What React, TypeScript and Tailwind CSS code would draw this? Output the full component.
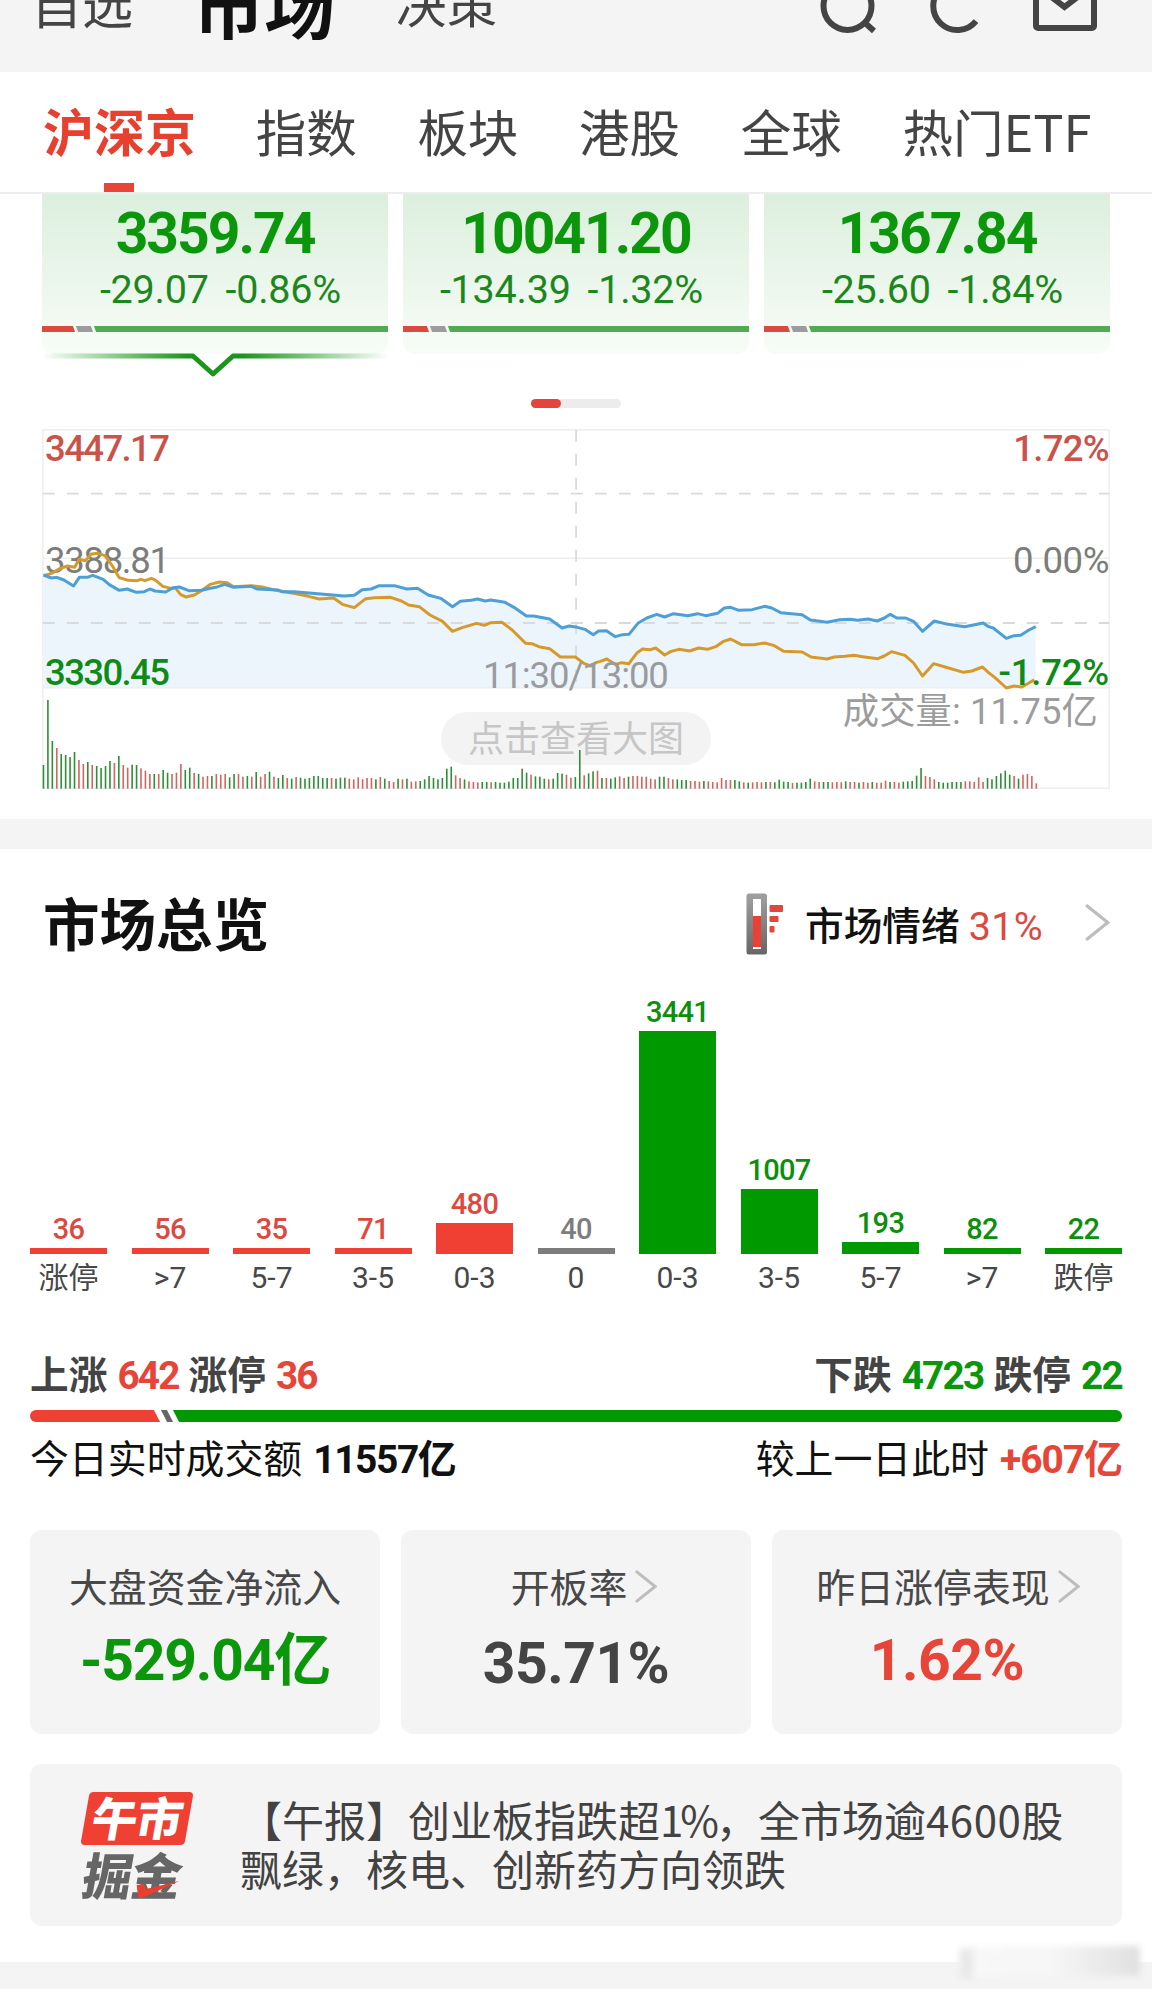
import { ReactNode } from 'react';

interface IndexCardProps {
  price: string;
  change: string;
  changeClass: string;
  redWidth: number;
  active?: boolean;
}

interface Bucket {
  label: string;
  count: number;
  height: number;
  tone: 'up' | 'flat' | 'down';
}

const indexes: IndexCardProps[] = [
  { price: '3359.74', change: '-29.07 -0.86%', changeClass: 'pl-[11px]', redWidth: 33, active: true },
  { price: '10041.20', change: '-134.39 -1.32%', changeClass: 'pr-[9px]', redWidth: 26 },
  { price: '1367.84', change: '-25.60 -1.84%', changeClass: 'pl-[11px]', redWidth: 26 },
];

const buckets: Bucket[] = [
  { label: '涨停', count: 36, height: 6, tone: 'up' },
  { label: '>7', count: 56, height: 6, tone: 'up' },
  { label: '5-7', count: 35, height: 6, tone: 'up' },
  { label: '3-5', count: 71, height: 6, tone: 'up' },
  { label: '0-3', count: 480, height: 31, tone: 'up' },
  { label: '0', count: 40, height: 6, tone: 'flat' },
  { label: '0-3', count: 3441, height: 223, tone: 'down' },
  { label: '3-5', count: 1007, height: 65, tone: 'down' },
  { label: '5-7', count: 193, height: 12, tone: 'down' },
  { label: '>7', count: 82, height: 6, tone: 'down' },
  { label: '跌停', count: 22, height: 6, tone: 'down' },
];

const priceLine =
  '38,465 60,474 75,472 95,480 122,498 138,472 160,472 176,466 205,478 222,494 250,511 272,507 298,517 320,515 336,507 350,513 380,516 400,503 418,501 445,512 480,511 505,505 520,502 545,493 570,502 620,499 635,507 695,510 705,515 740,515 880,528 908,526 930,509 955,507 978,497 1020,497 1055,507 1085,505 1115,525 1150,535 1183,560 1205,544 1235,541 1253,537 1275,543 1290,540 1330,547 1355,562 1390,588 1410,588 1455,597 1490,624 1510,618 1532,622 1554,628 1577,644 1592,633 1614,632 1639,650 1659,644 1677,643 1702,610 1727,594 1755,583 1777,591 1802,581 1842,587 1869,581 1892,587 1925,580 1944,564 1962,562 1985,571 2022,569 2057,559 2077,564 2102,578 2162,584 2185,600 2232,607 2267,599 2297,598 2317,601 2347,597 2372,603 2392,594 2409,583 2427,594 2452,594 2475,605 2499,634 2532,603 2562,611 2617,620 2669,609 2682,619 2697,624 2734,655 2755,647 2774,646 2797,630 2816,620';

const averageLine =
  '38,467 60,460 85,445 105,438 125,442 138,418 155,422 172,402 190,400 210,407 232,440 250,473 275,481 300,482 310,478 322,482 340,475 352,481 372,499 395,505 408,505 422,524 437,531 460,525 480,512 505,493 530,486 552,488 570,500 620,497 650,501 685,510 745,521 780,529 810,537 850,534 875,553 908,563 940,536 965,533 1010,532 1040,543 1060,555 1090,560 1120,585 1155,604 1183,634 1210,623 1250,610 1272,616 1290,608 1322,607 1350,630 1388,670 1405,671 1425,680 1455,686 1485,711 1527,711 1552,731 1570,738 1584,728 1597,724 1615,717 1639,733 1657,728 1677,731 1700,698 1715,687 1737,689 1752,684 1777,705 1795,694 1817,688 1847,693 1872,684 1897,688 1922,679 1940,665 1962,657 1992,674 2027,674 2057,669 2082,676 2110,694 2162,696 2187,711 2232,717 2252,711 2282,709 2307,706 2332,710 2374,716 2392,708 2412,695 2450,706 2474,729 2499,768 2530,731 2572,744 2614,757 2637,753 2667,741 2684,758 2702,773 2734,804 2755,798 2777,801 2792,792 2812,779';

// negative = red (up) minute, positive = green (down) minute
const volumes = [
  71, 266, 143, -122, 104, 101, 95, 110, -86, -74, 80, -71, 68, 62, 68, 83, -77, 98, -71, -63, 72, 71, -61, -54, -44,
  44, -44, 56, 48, -44, -48, -74, 56, 63, -47, 44, -36, -38, 38, -44, -42, -44, 34, 44, -44, -36, 38, -36, 50, -36,
  -44, 51, -36, 32, 41, -32, 30, -35, 33, 30, 32, 38, 38, 32, 32, -32, 30, 33, 33, -30, -28, -34, -28, -32, -32,
  28, -35, 30, -23, -20, 30, -28, 30, -21, -22, 23, 28, 38, 32, 28, 32, 60, 66, -40, -32, 28, -22, -20, -19, 20,
  20, -19, 20, 18, 18, 21, 32, 32, 60, 48, -42, 37, 36, 30, -28, 30, 47, 45, -42, -33, 35, 116, -40, 46, 52,
  -54, 32, -32, 30, 34, -37, -32, 36, -38, -38, -36, -36, -30, -28, 36, 36, -32, -28, 28, 26, 26, -23, -23, -21, 23,
  -22, -20, -19, -32, -26, -26, 26, 22, -19, 18, -19, -20, -19, 20, -20, 19, 27, 21, 20, -17, 18, 18, 20, 30, -22,
  -20, 20, 20, -19, -20, -19, 22, -20, -20, 18, -20, -18, 20, -18, -18, -24, 20, -20, -18, 21, 22, 23, 39, 62, -38,
  -35, -28, 20, 18, 18, 20, 20, 20, -22, -22, -20, -34, -20, 32, 28, 38, 46, 54, 42, -38, 30, -42, -44, -38, -16,
];

const barColor = { up: 'bg-[#ef4033]', flat: 'bg-[#7d7d7d]', down: 'bg-[#009900]' };
const countColor = { up: 'text-[#dc4a3f]', flat: 'text-[#7d7d7d]', down: 'text-[#0c8f0c]' };

function Chevron({ className }: { className: string }) {
  return (
    <svg viewBox="0 0 24 36" fill="none" stroke="#bdbdbd" strokeWidth="3.2" strokeLinecap="round" className={className}>
      <path d="M2 2 L22 18 L2 34" />
    </svg>
  );
}

function Header() {
  return (
    <header className="h-[72px] overflow-hidden bg-[#f4f4f4]">
      <div className="-mt-12 flex h-[100px] items-center pl-[31px] text-[51px] text-[#444]">
        <span>自选</span>
        <span className="ml-[60px] text-[71px] font-bold text-[#111]">市场</span>
        <span className="ml-[61px] text-[50.500px]">决策</span>
        <svg viewBox="0 0 300 100" fill="none" stroke="#444" strokeWidth="6" className="ml-[313px] h-[100px] w-[300px] shrink-0">
          <circle cx="37.500" cy="54" r="24" />
          <path d="M54 70 L64 79" />
          <path d="M166 69 A24 24 0 1 1 166 39" />
          <rect x="226" y="34" width="58" height="42" rx="2" />
          <path d="M235 40 L254.500 55 L274 40" />
        </svg>
      </div>
    </header>
  );
}

function Tabs() {
  const tabs = ['指数', '板块', '港股', '全球', '热门ETF'];
  return (
    <nav className="flex h-[122px] border-b-2 border-[#ededed] bg-white pl-[43px] text-[50.500px] leading-[116px] text-[#444]">
      <div className="flex w-[152px] flex-col">
        <span className="h-[111px] whitespace-nowrap text-[51px] font-bold text-[#e8402f]">沪深京</span>
        <span className="ml-[61px] h-[9px] w-[30px] bg-[#e64537]" />
      </div>
      {tabs.map((tab) => (
        <span key={tab} className="ml-[60.700px] whitespace-nowrap">{tab}</span>
      ))}
    </nav>
  );
}

function IndexCard({ price, change, changeClass, redWidth, active }: IndexCardProps) {
  return (
    <div className="relative h-[160px] w-[346px] rounded-b-xl bg-gradient-to-b from-[#dcefdd] to-[#f8fcf8] pt-[11px] text-center">
      <div className="text-[57px] font-bold leading-[57px] tracking-[-2px] text-[#0c960c]">{price}</div>
      <div className={`text-[39.500px] leading-[56px] tracking-[-0.200px] text-[#1c881c] [word-spacing:7px] ${changeClass}`}>{change}</div>
      <div className="mt-[8px] flex h-1.5 gap-[3px] overflow-hidden">
        <span className="-ml-1 skew-x-[20deg] bg-[#dc4a3f]" style={{ width: redWidth + 3 }} />
        <span className="w-[15px] skew-x-[20deg] bg-[#9c9c9c]" />
        <span className="-mr-1 flex-1 skew-x-[20deg] bg-[#51ab55]" />
      </div>
      {active && (
        <svg viewBox="0 0 346 26" className="absolute left-0 top-[159px] h-[26px] w-[346px]">
          <defs>
            <linearGradient id="fade" gradientUnits="userSpaceOnUse" x1="0" x2="346" y1="0" y2="0">
              <stop offset="0" stopColor="#1c951c" stopOpacity="0" />
              <stop offset="0.42" stopColor="#1c951c" />
              <stop offset="0.58" stopColor="#1c951c" />
              <stop offset="1" stopColor="#1c951c" stopOpacity="0" />
            </linearGradient>
          </defs>
          <path d="M152 2 L171 20 L190 2 Z" fill="#fff" />
          <path d="M0 3 H151 L171 21 L191 3 H346" fill="none" stroke="url(#fade)" strokeWidth="5" strokeLinejoin="round" />
        </svg>
      )}
    </div>
  );
}

function ChartLabel({ className, children }: { className: string; children: ReactNode }) {
  return <span className={`absolute text-[36.500px] leading-[37px] ${className}`}>{children}</span>;
}

function MinuteChart() {
  return (
    <div className="relative mx-[42px] mt-[21px] h-[360px]">
      <div className="absolute left-[399px] top-[283px] h-[53px] w-[270px] rounded-full bg-[#f3f3f3] text-center font-['Noto_Sans_CJK_SC',sans-serif] text-[36px] leading-[49px] text-[#c6c6c6]">
        点击查看大图
      </div>
      <svg viewBox="33.6 27 2990.4 1080" preserveAspectRatio="none" className="absolute inset-0 h-full w-full">
        <polygon points={`38,803 ${priceLine} 2816,803`} fill="#edf5fc" />
        <g fill="none" stroke="#eeeeee" strokeWidth="1.500">
          <rect x="36" y="29" width="2986" height="1076" vectorEffect="non-scaling-stroke" />
          <path d="M36 415 H3022 M36 803 H3022" vectorEffect="non-scaling-stroke" />
        </g>
        <path
          d="M36 221 H3022 M36 609 H3022 M1529 29 V803"
          fill="none"
          stroke="#dadada"
          strokeWidth="1.800"
          strokeDasharray="12 12"
          vectorEffect="non-scaling-stroke"
        />
        {volumes.map((v, i) => (
          <rect key={i} x={35.5 + i * 12.41} y={1106 - Math.abs(v)} width="4.500" height={Math.abs(v)} fill={v < 0 ? '#cf6660' : '#2f8f36'} />
        ))}
      </svg>
      <ChartLabel className="left-[3px] top-[1px] font-medium tracking-[-1.600px] text-[#c9524a]">3447.17</ChartLabel>
      <ChartLabel className="left-[3px] top-[113px] tracking-[-1.300px] text-[#7c7c7c]">3388.81</ChartLabel>
      <ChartLabel className="left-[3px] top-[225px] font-medium tracking-[-1.600px] text-[#0f8a16]">3330.45</ChartLabel>
      <ChartLabel className="right-[1px] top-[1px] font-medium tracking-[-0.700px] text-[#c9524a]">1.72%</ChartLabel>
      <ChartLabel className="right-[1px] top-[113px] tracking-[-0.400px] text-[#7c7c7c]">0.00%</ChartLabel>
      <svg viewBox="33.6 27 2990.4 1080" preserveAspectRatio="none" className="absolute inset-0 h-full w-full">
        <g fill="none" strokeWidth="3" strokeLinejoin="round">
          <polyline points={averageLine} stroke="#d69a2c" vectorEffect="non-scaling-stroke" />
          <polyline points={priceLine} stroke="#4d9fd6" vectorEffect="non-scaling-stroke" />
        </g>
      </svg>
      <ChartLabel className="left-[441px] top-[228px] tracking-[-1.100px] text-[#999ba0]">11:30/13:00</ChartLabel>
      <ChartLabel className="right-[1px] top-[225px] font-medium tracking-[-0.200px] text-[#0f8a16]">-1.72%</ChartLabel>
      <div className="absolute right-[12px] top-[258px] whitespace-nowrap text-[36.300px] leading-[50px] tracking-[0.100px] text-[#9c9c9c]">
        成交量: 11.75亿
      </div>
    </div>
  );
}

function MoodIcon() {
  return (
    <svg viewBox="0 0 38 62" className="h-[62px] w-[38px]">
      <defs>
        <linearGradient id="tube" x1="0" x2="0" y1="0" y2="1">
          <stop offset="0" stopColor="#a0a0a0" />
          <stop offset="1" stopColor="#666" />
        </linearGradient>
      </defs>
      <rect x="0.500" y="0.500" width="20.500" height="61" rx="2.500" fill="url(#tube)" />
      <rect x="7" y="6" width="8" height="50" fill="#fff" />
      <rect x="7" y="23" width="8" height="31" fill="#ec4034" />
      <rect x="23.500" y="12" width="13.500" height="7" rx="1" fill="#dc4a3f" />
      <rect x="23.500" y="23" width="9" height="6" rx="1" fill="#dc4a3f" />
      <rect x="23.500" y="33" width="5" height="6.500" rx="1" fill="#dc4a3f" />
    </svg>
  );
}

function Distribution() {
  return (
    <div className="mx-[30px] flex h-[329px] items-end justify-between">
      {buckets.map((b, idx) => (
        <div key={idx} className="flex w-[77px] flex-col items-center">
          <span className={`mb-[3px] text-[29px] font-medium leading-[31px] tracking-[-0.700px] ${countColor[b.tone]}`}>{b.count}</span>
          <span className={`w-full ${barColor[b.tone]}`} style={{ height: b.height }} />
          <span className="h-[46px] whitespace-nowrap pt-[4px] text-[30px] leading-[40px] text-[#484848]">{b.label}</span>
        </div>
      ))}
    </div>
  );
}

function StatCard({ title, value, valueClass, titleClass, arrow }: { title: string; value: string; valueClass: string; titleClass?: string; arrow?: boolean }) {
  return (
    <div className="h-[204px] w-[350px] rounded-xl bg-[#f4f4f4] pt-[34px] text-center">
      <div className={`flex h-[46px] items-center justify-center text-[38.900px] text-[#484848] ${titleClass ?? ''}`}>
        <span className="-mt-[5px] font-['Noto_Sans_CJK_SC',sans-serif] leading-[46px]">{title}</span>
        {arrow && <Chevron className="ml-[8px] -mt-[2px] h-[35px] w-[22px]" />}
      </div>
      <div className={`text-[57px] font-bold leading-[60px] ${valueClass}`}>{value}</div>
    </div>
  );
}

function News() {
  return (
    <div className="mx-[30px] mt-[30px] flex h-[162px] rounded-xl bg-[#f4f4f4] font-['Noto_Sans_CJK_SC',sans-serif]">
      <div className="ml-[51px] mt-[28px] w-[112px] text-[46px] font-black tracking-[-1px]">
        <div className="mx-[4px] h-[53px] -skew-x-[10deg] rounded-sm bg-[#ef4033] text-center leading-[49px] text-white">午市</div>
        <div className="relative mx-[2px] mt-[6px] h-[52px] -skew-x-[10deg] text-[50px] leading-[44px] text-[#666]">
          掘金
          <svg viewBox="0 0 42 18" className="absolute left-[55px] top-[30px] h-[18px] w-[42px]">
            <path d="M0 4 L7 3 L10 8 L42 0 L8 17 L4 17 Z" fill="#e8402f" />
          </svg>
        </div>
      </div>
      <p className="ml-[47px] mt-[30px] whitespace-nowrap text-[42px] leading-[49px] text-[#424242]">
        【午报】创业板指跌超<span className="tracking-[-3px]">1%</span>，全市场逾<span className="tracking-[0.500px]">4600</span>股
        <br />
        飘绿，核电、创新药方向领跌
      </p>
    </div>
  );
}

export default function App() {
  return (
    <div className="h-[1989px] w-[1152px] overflow-hidden bg-white font-['Roboto','Noto_Sans_CJK_SC',sans-serif]">
      <div className="font-['Noto_Sans_CJK_SC',sans-serif]">
        <Header />
        <Tabs />
      </div>

      <section className="h-[625px]">
        <div className="flex justify-between px-[42px]">
          {indexes.map((item) => (
            <IndexCard key={item.price} {...item} />
          ))}
        </div>
        <div className="mx-auto mt-[45px] h-[9px] w-[90px] rounded-full bg-[#ececec]">
          <div className="h-full w-[30px] rounded-full bg-[#e8433a]" />
        </div>
        <MinuteChart />
      </section>

      <div className="h-[30px] bg-[#f4f4f4]" />

      <section className="h-[1113px]">
        <div className="flex h-[122px] items-start pl-[43px]">
          <h2 className="mt-[44px] w-[226px] whitespace-nowrap font-['Noto_Sans_CJK_SC',sans-serif] text-[56.500px] font-bold leading-[56px] text-[#111]">市场总览</h2>
          <div className="ml-[477px] mt-[44px] flex h-[62px] items-center">
            <MoodIcon />
            <span className="ml-[21px] mt-[6px] text-[38.700px] font-medium text-[#111]">市场情绪</span>
            <span className="ml-[9px] mt-[6px] text-[39.500px] tracking-[0.300px] text-[#dc4a3f]">31%</span>
            <Chevron className="-mt-[3px] ml-[42px] h-[37px] w-[25px]" />
          </div>
        </div>
        <Distribution />

        <div className="mx-[30px] mt-[52px] flex h-[48px] justify-between text-[38.700px] font-bold leading-[48px] text-[#444]">
          <div className="flex gap-[10px]">
            <span>上涨</span>
            <span className="tracking-[-1.800px] text-[#e64537]">642</span>
            <span>涨停</span>
            <span className="tracking-[-1.800px] text-[#e64537]">36</span>
          </div>
          <div className="flex gap-[10px]">
            <span>下跌</span>
            <span className="tracking-[-1.700px] text-[#0c960c]">4723</span>
            <span>跌停</span>
            <span className="tracking-[-1.700px] text-[#0c960c]">22</span>
          </div>
        </div>
        <div className="mx-[30px] mt-[10px] flex h-3 gap-[6.500px] overflow-hidden rounded-full">
          <span className="-ml-2 w-[135px] skew-x-[27deg] bg-[#ef4033]" />
          <span className="w-[6px] skew-x-[27deg] bg-[#666]" />
          <span className="-mr-2 flex-1 skew-x-[27deg] bg-[#009900]" />
        </div>
        <div className="mx-[30px] mt-[13px] flex h-[50px] justify-between text-[38.900px] leading-[50px] text-[#111]">
          <div className="flex gap-[11px]">
            <span>今日实时成交额</span>
            <span className="font-bold tracking-[-1.400px]">11557亿</span>
          </div>
          <div className="flex gap-[11px]">
            <span>较上一日此时</span>
            <span className="font-bold tracking-[-1px] text-[#e64537]">+607亿</span>
          </div>
        </div>

        <div className="mx-[30px] mt-[45px] flex justify-between">
          <StatCard title="大盘资金净流入" value="-529.04亿" valueClass="pt-[21px] tracking-[-1.200px] text-[#0c960c]" />
          <StatCard title="开板率" value="35.71%" titleClass="pl-[16px]" valueClass="pt-[24px] tracking-[-0.500px] text-[#444]" arrow />
          <StatCard title="昨日涨停表现" value="1.62%" titleClass="pl-[2px]" valueClass="pt-[21px] tracking-[-0.500px] text-[#e64537]" arrow />
        </div>
        <News />
      </section>

      <footer className="relative h-[27px] bg-[#f4f4f4]">
        <span className="absolute -top-[16px] left-[960px] h-[30px] w-[180px] bg-gradient-to-r from-[#f8f8f8] via-[#f7f7f7] to-[#e0e0e0] blur-[3px]" />
        <span className="absolute -top-[12px] left-[960px] h-[28px] w-[13px] bg-[#e8e8e8] blur-[3px]" />
      </footer>
    </div>
  );
}
